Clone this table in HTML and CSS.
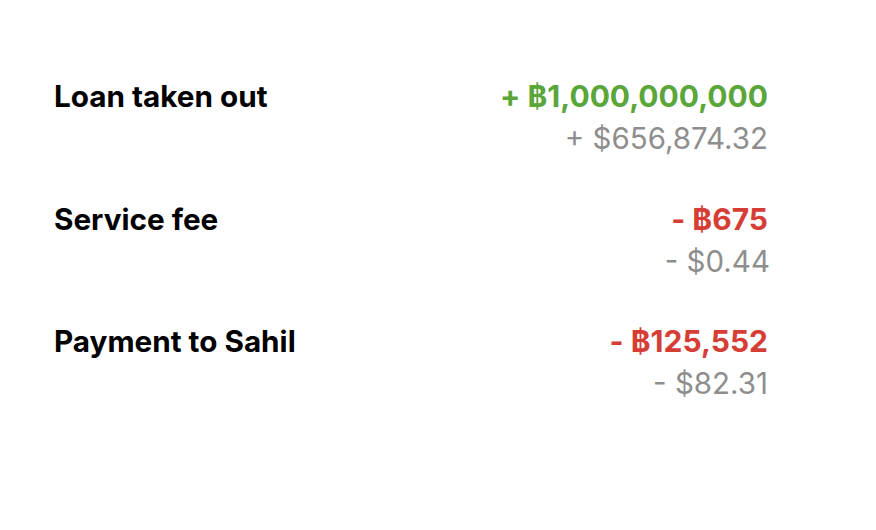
FILE: index.html
```html
<!DOCTYPE html>
<html>
<head>
<meta charset="utf-8">
<link rel="stylesheet" href="styles.css">
</head>
<body>
<div class="list">
  <div class="row">
    <div class="label">Loan taken out</div>
    <div class="amounts">
      <div class="crypto pos">+ ฿1,000,000,000</div>
      <div class="fiat">+ $656,874.32</div>
    </div>
  </div>
  <div class="row">
    <div class="label">Service fee</div>
    <div class="amounts">
      <div class="crypto neg">- ฿675</div>
      <div class="fiat shift">- $0.44</div>
    </div>
  </div>
  <div class="row">
    <div class="label">Payment to Sahil</div>
    <div class="amounts">
      <div class="crypto neg">- ฿125,552</div>
      <div class="fiat">- $82.31</div>
    </div>
  </div>
</div>
</body>
</html>
```
FILE: styles.css
```css
html, body {
  margin: 0;
  background: #ffffff;
}
body {
  font-family: Inter, "Noto Sans", sans-serif;
  width: 876px;
  height: 530px;
}
.list {
  padding: 75px 108px 0 54px;
  display: flex;
  flex-direction: column;
  gap: 38.5px;
}
.row {
  display: flex;
  justify-content: space-between;
  align-items: flex-start;
}
.label {
  font-size: 29.7px;
  font-weight: 700;
  color: #000;
  line-height: 42px;
}
.amounts {
  display: flex;
  flex-direction: column;
  align-items: flex-end;
}
.crypto {
  font-size: 30px;
  font-weight: 700;
  line-height: 42px;
}
.pos { color: #5aa63a; }
.neg { color: #d63d35; }
.fiat {
  font-size: 29.5px;
  font-weight: 400;
  color: #8e8e8e;
  line-height: 42px;
}
.shift {
  margin-right: -2px;
}
```
